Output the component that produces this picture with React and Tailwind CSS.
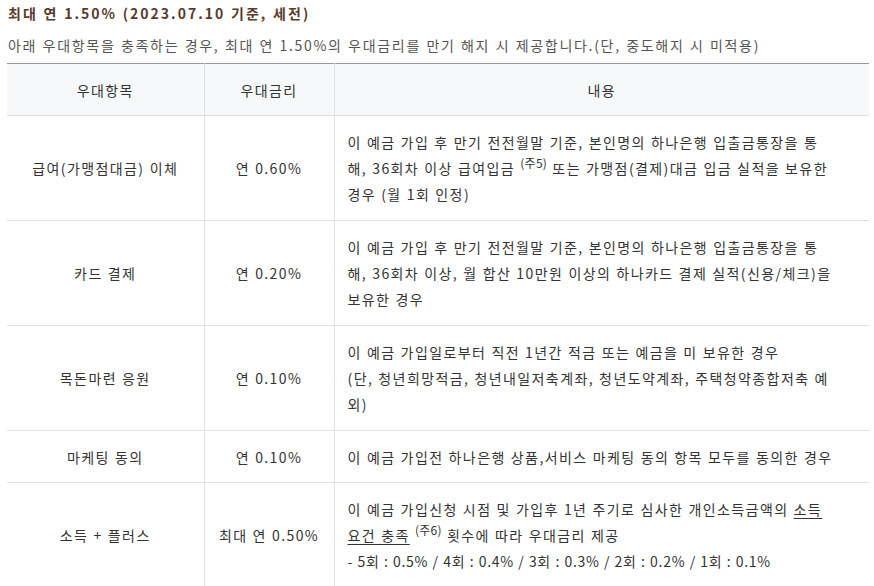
import React from "react";

const font = { fontFamily: '"Noto Sans CJK KR", "Noto Sans", sans-serif' };

function Sup({ children }) {
  return (
    <span className="relative top-[-6px] text-[12px] leading-none tracking-[0.3px]">{children}</span>
  );
}

const rows = [
  {
    name: "급여(가맹점대금) 이체",
    rate: "연 0.60%",
    lines: [
      "이 예금 가입 후 만기 전전월말 기준, 본인명의 하나은행 입출금통장을 통",
      <>
        해, 36회차 이상 급여입금 <Sup>(주5)</Sup> 또는 가맹점(결제)대금 입금 실적을 보유한
      </>,
      "경우 (월 1회 인정)",
    ],
  },
  {
    name: "카드 결제",
    rate: "연 0.20%",
    lines: [
      "이 예금 가입 후 만기 전전월말 기준, 본인명의 하나은행 입출금통장을 통",
      "해, 36회차 이상, 월 합산 10만원 이상의 하나카드 결제 실적(신용/체크)을",
      "보유한 경우",
    ],
  },
  {
    name: "목돈마련 응원",
    rate: "연 0.10%",
    lines: [
      "이 예금 가입일로부터 직전 1년간 적금 또는 예금을 미 보유한 경우",
      "(단, 청년희망적금, 청년내일저축계좌, 청년도약계좌, 주택청약종합저축 예",
      "외)",
    ],
  },
  {
    name: "마케팅 동의",
    rate: "연 0.10%",
    lines: ["이 예금 가입전 하나은행 상품,서비스 마케팅 동의 항목 모두를 동의한 경우"],
  },
  {
    name: "소득 + 플러스",
    rate: "최대 연 0.50%",
    lines: [
      <>
        이 예금 가입신청 시점 및 가입후 1년 주기로 심사한 개인소득금액의 <span className="underline underline-offset-[3px]">소득</span>
      </>,
      <>
        <span className="underline underline-offset-[3px]">요건 충족</span> <Sup>(주6)</Sup> 횟수에 따라 우대금리 제공
      </>,
      <span className="tracking-[0.7px]">- 5회 : 0.5% / 4회 : 0.4% / 3회 : 0.3% / 2회 : 0.2% / 1회 : 0.1%</span>,
    ],
  },
];

export default function App() {
  return (
    <div
      className="w-[874px] h-[586px] overflow-hidden bg-white pl-[7px] pt-[3px] text-[14px] text-[#333] tracking-[1.4px] [word-spacing:0.6px]"
      style={font}
    >
      <div className="pl-[1px] text-[14px] leading-[20px] font-bold tracking-[2px] text-[#5a3b2c]">
        최대 연 1.50% (2023.07.10 기준, 세전)
      </div>
      <div className="mt-[12px] pl-[1px] leading-[20px] tracking-[1.7px] text-[#555]">
        아래 우대항목을 충족하는 경우, 최대 연 1.50%의 우대금리를 만기 해지 시 제공합니다.(단, 중도해지 시 미적용)
      </div>
      <table className="mt-[8px] w-[862px] table-fixed border-collapse border-t border-t-[#999]">
        <colgroup>
          <col className="w-[197px]" />
          <col className="w-[130px]" />
          <col className="w-[535px]" />
        </colgroup>
        <thead>
          <tr className="h-[52px] bg-[#f7f8fa]">
            <th className="border-b border-[#e1e1e1] font-normal leading-[26px]">우대항목</th>
            <th className="border-b border-l border-[#e1e1e1] font-normal leading-[26px]">우대금리</th>
            <th className="border-b border-l border-[#e1e1e1] font-normal leading-[26px]">내용</th>
          </tr>
        </thead>
        <tbody>
          {rows.map((r, i) => (
            <tr key={i} className={i === 3 ? "h-[52px]" : "h-[105px]"}>
              <td className="border-b border-[#e1e1e1] text-center align-middle leading-[26px]">{r.name}</td>
              <td className="border-b border-l border-[#e1e1e1] text-center align-middle leading-[26px]">{r.rate}</td>
              <td className="border-b border-l border-[#e1e1e1] pl-[13px] pr-[2px] align-middle leading-[26px]">
                {r.lines.map((l, j) => (
                  <div key={j} className="whitespace-nowrap">{l}</div>
                ))}
              </td>
            </tr>
          ))}
        </tbody>
      </table>
    </div>
  );
}
